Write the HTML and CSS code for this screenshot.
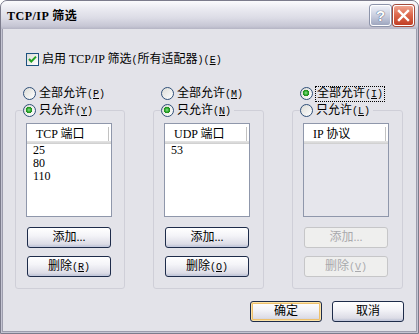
FILE: index.html
```html
<!doctype html>
<html lang="zh-CN">
<head>
    <title>TCP/IP 筛选</title>
    <meta charset="utf-8">
    <link rel="stylesheet" href="styles.css">
</head>
<body>
<div class="window">
    <div class="titlebar">
        <span class="title">TCP/IP 筛选</span>
        <div class="caption-btns">
            <span class="cbtn help">?</span>
            <span class="cbtn close">
                <svg width="13" height="13" viewBox="0 0 13 13"><path d="M2 2 L11 11 M11 2 L2 11" stroke="#fff" stroke-width="2.4" stroke-linecap="square"/></svg>
            </span>
        </div>
    </div>
    <div class="client">
        <div class="check-row">
            <span class="checkbox">
                <svg width="11" height="11" viewBox="0 0 11 11"><path d="M2 5 L4.3 7.5 L9 2.6" fill="none" stroke="#21a121" stroke-width="2"/></svg>
            </span>
            <span>启用 TCP/IP 筛选<span class="mn">(</span>所有适配器<span class="mn">)(<u>E</u>)</span></span>
        </div>

        <div class="columns">
            <!-- TCP ports -->
            <div class="col">
                <div class="radio-row"><span class="radio"></span><span>全部允许<span class="mn">(<u>P</u>)</span></span></div>
                <fieldset class="group">
                    <legend><div class="radio-row"><span class="radio on"></span><span>只允许<span class="mn">(<u>Y</u>)</span></span></div></legend>
                    <div class="listbox">
                        <div class="lv-header"><span>TCP 端口</span></div>
                        <div class="lv-row">25</div>
                        <div class="lv-row">80</div>
                        <div class="lv-row">110</div>
                    </div>
                    <button class="btn">添加...</button>
                    <button class="btn">删除<span class="mn">(<u>R</u>)</span></button>
                </fieldset>
            </div>

            <!-- UDP ports -->
            <div class="col">
                <div class="radio-row"><span class="radio"></span><span>全部允许<span class="mn">(<u>M</u>)</span></span></div>
                <fieldset class="group">
                    <legend><div class="radio-row"><span class="radio on"></span><span>只允许<span class="mn">(<u>N</u>)</span></span></div></legend>
                    <div class="listbox">
                        <div class="lv-header"><span>UDP 端口</span></div>
                        <div class="lv-row">53</div>
                    </div>
                    <button class="btn">添加...</button>
                    <button class="btn">删除<span class="mn">(<u>O</u>)</span></button>
                </fieldset>
            </div>

            <!-- IP protocols -->
            <div class="col">
                <div class="radio-row"><span class="radio on"></span><span class="focused">全部允许<span class="mn">(<u>I</u>)</span></span></div>
                <fieldset class="group">
                    <legend><div class="radio-row"><span class="radio"></span><span>只允许<span class="mn">(<u>L</u>)</span></span></div></legend>
                    <div class="listbox disabled">
                        <div class="lv-header"><span>IP 协议</span></div>
                    </div>
                    <button class="btn" disabled>添加...</button>
                    <button class="btn" disabled>删除<span class="mn">(<u>V</u>)</span></button>
                </fieldset>
            </div>
        </div>

        <div class="footer">
            <button class="btn btn-wide default">确定</button>
            <button class="btn btn-wide">取消</button>
        </div>
    </div>
</div>
</body>
</html>
```

FILE: styles.css
```css
html, body { height: 100%; }
body {
    margin: 0;
    background: #fff;
    font-family: "Liberation Serif", "Noto Sans CJK SC", serif;
    font-size: 12px;
    color: #000;
}
.window {
    width: 419px;
    height: 334px;
    box-sizing: border-box;
    display: flex;
    flex-direction: column;
    border: 1px solid #7c7c8c;
    border-radius: 7px 7px 0 0;
    padding: 0 1px 1px;
    background: #c4c4d2;
    overflow: hidden;
}
.titlebar {
    height: 28px;
    flex: none;
    display: flex;
    align-items: center;
    justify-content: space-between;
    padding: 0 4px 0 6px;
    margin: 0 -1px;
    background: linear-gradient(#fbfbfd 0%, #ececf2 25%, #dcdce6 60%, #c6c6d4 90%, #b4b4c4 100%);
}
.title {
    font-weight: bold;
    font-size: 12px;
    line-height: 14px;
    padding-top: 1px;
    letter-spacing: 0.5px;
}
.caption-btns { display: flex; gap: 2px; }
.cbtn {
    width: 21px;
    height: 21px;
    box-sizing: border-box;
    border: 1px solid #fff;
    border-radius: 3px;
    display: flex;
    align-items: center;
    justify-content: center;
}
.help {
    background: linear-gradient(#eef0f8, #c3c8da 60%, #9ea6bf);
    color: #fff;
    font-family: "Liberation Sans", sans-serif;
    font-weight: bold;
    font-size: 15px;
    text-shadow: 0 0 1px #4b5675, 0 0 1px #4b5675;
    box-shadow: 0 0 0 1px #8d94aa;
}
.close {
    background: linear-gradient(#f0a590, #dd6a4f 45%, #c13e24);
    box-shadow: 0 0 0 1px #a34a3a;
}
.client {
    flex: 1;
    border: 1px solid #9d9dad;
    border-top: none;
    background: #e3e3e9;
    padding: 24px 12px 0;
}
/* mnemonic brackets: half-width like the system font */
.mn {
    font-family: "Liberation Mono", monospace;
    font-size: 10px;
}
.check-row {
    display: flex;
    align-items: center;
    gap: 3px;
    margin-left: 11px;
    height: 13px;
    line-height: 13px;
}
.checkbox {
    width: 13px;
    height: 13px;
    box-sizing: border-box;
    border: 1px solid #1c5180;
    background: linear-gradient(135deg, #dcdcd7, #fff);
    display: flex;
    align-items: center;
    justify-content: center;
}
.columns {
    display: flex;
    gap: 28px;
    margin-top: 21px;
}
.col {
    width: 111px;
    display: flex;
    flex-direction: column;
    gap: 4px;
}
.col:first-child { width: 110px; }
.col > .radio-row { margin-left: 8px; }
.radio-row {
    display: flex;
    align-items: center;
    gap: 3px;
    height: 13px;
    line-height: 13px;
    white-space: nowrap;
}
.radio {
    width: 13px;
    height: 13px;
    box-sizing: border-box;
    border-radius: 50%;
    border: 1px solid #2f4f78;
    background: linear-gradient(135deg, #dcdcd7, #fff);
    flex: none;
}
.radio.on {
    background:
        radial-gradient(circle at 45% 45%, #8fe08f 0, #2caa2c 2px, #1d8a1d 3px, transparent 3.5px),
        linear-gradient(135deg, #dcdcd7, #fff);
}
.focused { outline: 1px dotted #000; outline-offset: 0; padding: 0 1px; }
.group {
    margin: 0;
    min-width: 0;
    padding: 6px 12px 11px 10px;
    border: 1px solid #cfcfd8;
    border-radius: 3px;
    display: flex;
    flex-direction: column;
}
.group legend {
    padding: 0 3px 0 0;
    margin-left: -3px;
}
.listbox {
    width: 86px;
    height: 94px;
    box-sizing: border-box;
    border: 1px solid #8f97ab;
    background: #fff;
    line-height: 13px;
}
.listbox.disabled { background: #e6e6ec; }
.lv-header {
    height: 20px;
    box-sizing: border-box;
    padding: 4px 0 0 9px;
    background: linear-gradient(#fff 0, #fff 17px, #e4e4e4 17px, #d7d7d7 19px, #cbcbcb 20px);
    position: relative;
}
.lv-header::after {
    content: "";
    position: absolute;
    right: 2px;
    top: 3px;
    width: 1px;
    height: 14px;
    background: #c2c2c2;
    box-shadow: 1px 0 0 #fff;
}
.lv-row {
    height: 13px;
    padding-left: 6px;
}
.lv-row:first-of-type { margin-top: 1px; }
.btn {
    font-family: inherit;
    font-size: 12px;
    color: #000;
    width: 84px;
    height: 21px;
    margin: 10px 0 0 1px;
    padding: 0;
    line-height: 17px;
    border: 1px solid #1e2c4a;
    border-radius: 3px;
    background: linear-gradient(#ffffff 0%, #f4f4f8 40%, #dcdce6 85%, #b8bfd2 100%);
    box-shadow: inset 0 -1px 0 #c4c9dc;
}
.btn + .btn { margin-top: 8px; }
.btn:disabled {
    color: #a9a9ac;
    border-color: #c6c6c8;
    background: #efefee;
    box-shadow: none;
}
.footer {
    display: flex;
    justify-content: flex-end;
    gap: 10px;
    margin-top: 12px;
}
.footer .btn { margin: 0; }
.btn-wide { width: 72px; }
.default {
    box-shadow: inset 0 0 0 1px #fbe3a8, inset 0 0 0 2px #eec06c;
}
```
